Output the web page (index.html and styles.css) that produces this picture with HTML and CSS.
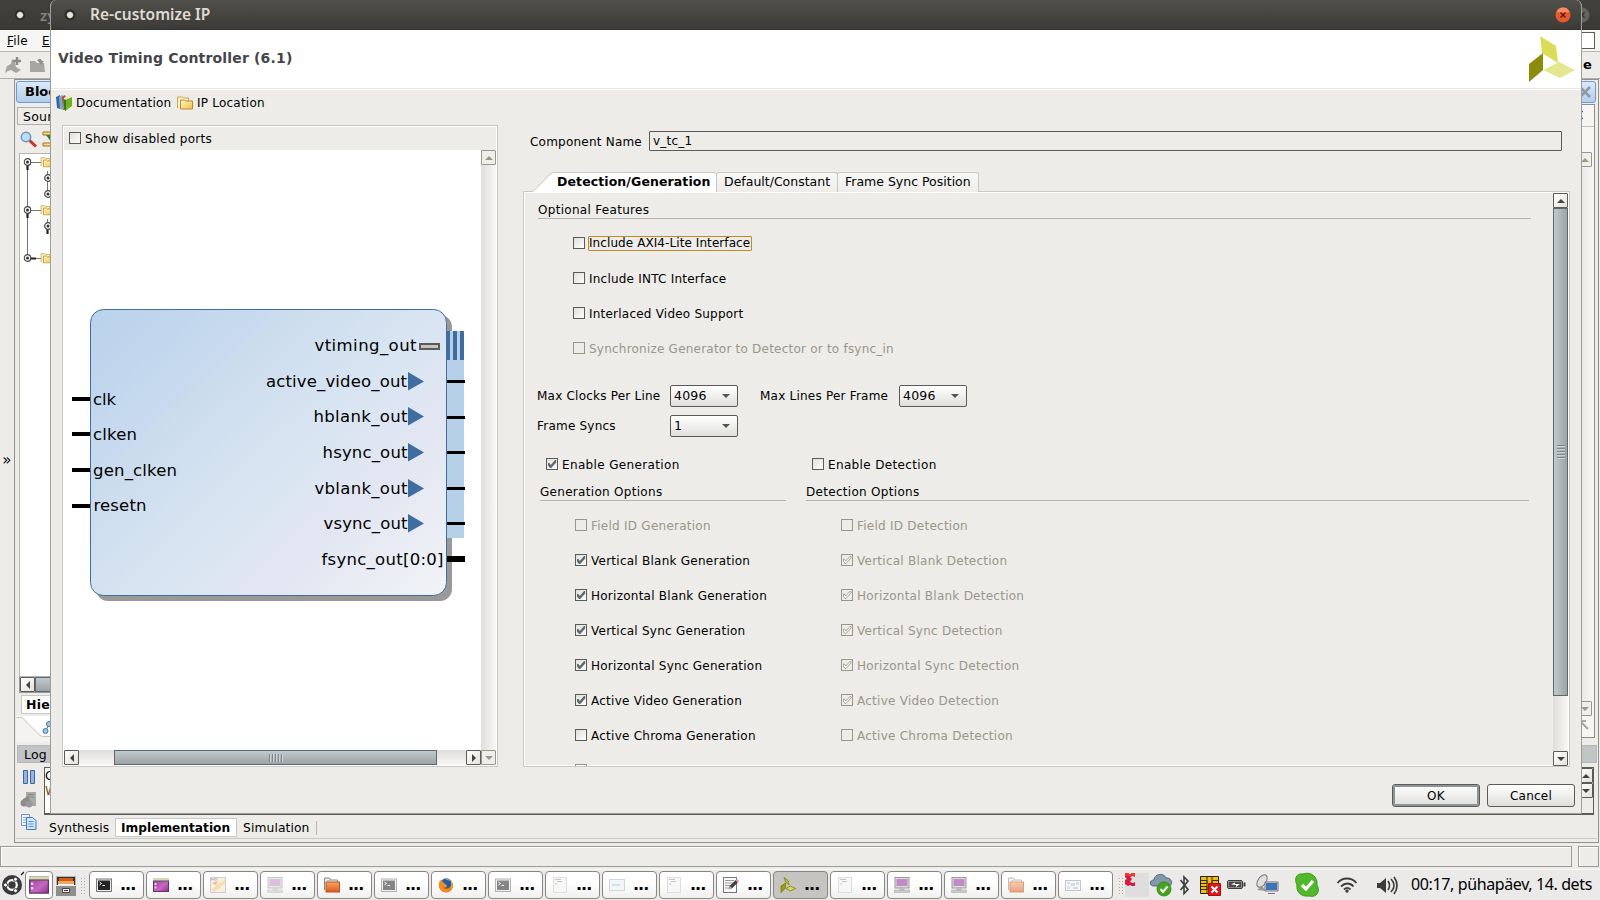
FILE: index.html
```html
<!DOCTYPE html>
<html lang="et">
<head>
<meta charset="utf-8">
<title>Re-customize IP</title>
<link rel="stylesheet" href="styles.css">
</head>
<body>
<svg class="defs" width="0" height="0">
  <defs>
    <linearGradient id="gFold" x1="0" y1="0" x2="1" y2="1"><stop offset="0" stop-color="#fff6c8"/><stop offset="1" stop-color="#f3c142"/></linearGradient>
    <linearGradient id="gPurple" x1="0" y1="0" x2="1" y2="1"><stop offset="0" stop-color="#a23a9f"/><stop offset=".6" stop-color="#c468c1"/><stop offset="1" stop-color="#8f2d8d"/></linearGradient>
    <linearGradient id="gOrange" x1="0" y1="0" x2="0" y2="1"><stop offset="0" stop-color="#f6a568"/><stop offset="1" stop-color="#de5a20"/></linearGradient>
    <linearGradient id="gBox" x1="0" y1="0" x2="1" y2="1"><stop offset="0" stop-color="#ddddda"/><stop offset="1" stop-color="#fff"/></linearGradient>
    <symbol id="folder" viewBox="0 0 16 14"><path d="M.5 12.500V1.500h5l1 1h5v3" fill="#fff3c4" stroke="#c9a25a"/><path d="M3.500 13.500v-9h4l1 1h7v8z" fill="url(#gFold)" stroke="#b98a34"/></symbol>
    <symbol id="node" viewBox="0 0 8 8"><circle cx="4" cy="4" r="3.300" fill="#fff" stroke="#444" stroke-width="1.200"/><circle cx="4" cy="4" r="1.500" fill="#333"/></symbol>
    <symbol id="box" viewBox="0 0 12 12"><rect x=".5" y=".5" width="11" height="11" fill="url(#gBox)" stroke="#5c5b55"/></symbol>
    <symbol id="boxOn" viewBox="0 0 12 12"><rect x=".5" y=".5" width="11" height="11" fill="url(#gBox)" stroke="#5c5b55"/><path d="M2 5h1.500l1.300 2L9 2h1.200v2.500L5.200 10H4L2 7.500z" fill="#5e686d"/></symbol>
    <symbol id="boxOff" viewBox="0 0 12 12"><rect x=".5" y=".5" width="11" height="11" fill="none" stroke="#99968a"/></symbol>
    <symbol id="boxOnOff" viewBox="0 0 12 12"><rect x=".5" y=".5" width="11" height="11" fill="none" stroke="#99968a"/><path d="M2.500 5h1l1.300 2L8.800 2.500h1.200V4L5 9.500H4L2.500 7.500z" fill="#f6f5f2" stroke="#99968a" stroke-width=".8"/></symbol>
    <symbol id="term" viewBox="0 0 16 16"><rect x=".5" y="2" width="15" height="12.500" fill="#eee" stroke="#777"/><rect x="2" y="3.500" width="12" height="9.500" fill="#252525"/><path d="M3.500 5l2 1.500-2 1.500M6.500 8.500h2.500" stroke="#fff" fill="none"/></symbol>
    <symbol id="purple" viewBox="0 0 16 16"><rect x=".5" y="1.500" width="15" height="13" fill="url(#gPurple)" stroke="#5a3a58"/><path d="M0 1h16v3H0z" fill="#d9d6b6"/><path d="M0 4h16" stroke="#555"/><path d="M1.500 6h2v2h-2zM1.500 9.500h2v2h-2z" fill="#ead5ea"/></symbol>
    <symbol id="map" viewBox="0 0 16 16"><rect x=".5" y=".5" width="15" height="15" fill="#fbe8c9" stroke="#aaa"/><path d="M1 12C6 12 5 7 9 6s4-3 6-4v5c-4 1-4 4-7 5s-3 2-4 3z" fill="#f4c67b"/><path d="M2 2l3 3 3-2-2 5-4-2 3-1z" fill="#e48158"/><path d="M1 4V1l2 2 2-2v3M7 1v2" stroke="#777" fill="none"/></symbol>
    <symbol id="pc" viewBox="0 0 16 16"><rect x="1" y=".5" width="14" height="10.500" fill="#dcdcdc" stroke="#999"/><rect x="2.500" y="2" width="11" height="7" fill="#c08bc6"/><path d="M6 11h4v2H6zM.5 13h15v2.500H.5z" fill="#ccc" stroke="#aaa" stroke-width=".6"/></symbol>
    <symbol id="ofold" viewBox="0 0 16 16"><path d="M.5 13V1h5l1 2h7v3" fill="#eee" stroke="#888"/><rect x="2" y="5" width="13.500" height="10" fill="url(#gOrange)" stroke="#b9541d"/><path d="M3 3.500h9" stroke="#bbb"/></symbol>
    <symbol id="ffox" viewBox="0 0 16 16"><circle cx="8" cy="8.500" r="7" fill="#e8611b"/><circle cx="8.500" cy="6.500" r="5" fill="#1f5da8"/><path d="M2 3c1 2 3 1 4 3s3 1 3 3-3 2-4 1c1 3 6 3 8 0s1-5 0-6c3 3 2 8-1 10s-8 1-10-2-1-6 0-9z" fill="#f58b1d"/><path d="M12 3c2 3 2 6 0 8 3-1 3-6 0-8z" fill="#fbd043"/><path d="M7 2c2-1 4 0 5 2l-3-1z" fill="#62b4e8"/></symbol>
    <symbol id="doc" viewBox="0 0 16 16"><rect x="1.500" y=".5" width="13" height="15" fill="#f7f7f7" stroke="#ddd"/><path d="M3 2.500h6M5 4.500h5M3 7h2" stroke="#c5c5c5"/></symbol>
    <symbol id="sheet" viewBox="0 0 16 16"><rect x=".5" y="2.500" width="15" height="11" fill="#f3f6f6" stroke="#d0d6d6"/><path d="M3 8h8" stroke="#a8d8dc"/></symbol>
    <symbol id="edit" viewBox="0 0 16 16"><rect x=".5" y=".5" width="13" height="15" fill="#fafafa" stroke="#777"/><path d="M2 3.500h9M2 6h8M2 8.500h6M2 11h4" stroke="#999"/><path d="M6 12l1-3 6-6 2 2-6 6z" fill="#444" stroke="#222" stroke-width=".5"/><path d="M12.500 3.500L14 2l2 2-1.500 1.500z" fill="#d890c0"/><path d="M5.500 12.500L7 9.500l2 1.500z" fill="#e9c07c"/></symbol>
    <symbol id="xil" viewBox="0 0 16 16"><path d="M4 .5l4.500 3.500.5 4-3.500-3z" fill="#b9bd35" stroke="#77790f" stroke-width=".7"/><path d="M1 9l4.500-3v5L1 15.500z" fill="#9c9e12" stroke="#6f7007" stroke-width=".7"/><path d="M6 11.500L10.500 9l5 2.500-5 2.500z" fill="#d3d650" stroke="#77790f" stroke-width=".7"/></symbol>
    <symbol id="win" viewBox="0 0 16 16"><rect x=".5" y="3.500" width="15" height="10" fill="#f4f4f4" stroke="#999"/><path d="M2 5h3v2H2zM6 6h4v3H6zM11 5h3v3h-3zM8 10h5v2H8z" fill="#a9c3dd"/><path d="M2 9h3v3H2z" fill="#ccc"/></symbol>
  </defs>
</svg>

<div class="desktop">
  <div class="main-window">
    <div class="titlebar back-title">
      <span class="wm-dot"></span><span class="back-name">zy</span>
      <svg class="back-close" width="16" height="16"><circle cx="8" cy="8" r="7.500" fill="#63625d"/><path d="M5.500 5.500l5 5m0-5l-5 5" stroke="#333" stroke-width="1.500"/></svg>
    </div>
    <div class="menubar"><span><u>F</u>ile</span><span><u>E</u>dit</span><i class="search"></i></div>
    <div class="toolbar">
      <svg width="18" height="18" viewBox="0 0 18 18"><path d="M1 17l2-7 4-2 1-5 3 4 1 4 5 3-5 3-5-3-3 1z" fill="#a5a5a2"/><path d="M13 1v8M9 5h8" stroke="#8b8b88" stroke-width="2.500"/></svg>
      <svg width="17" height="16" viewBox="0 0 17 16"><path d="M1 15V4h5l2 2h7l1 9z" fill="#a6a6a3"/><path d="M8 4c2-3 4-3 5 0h2l-3 4-3-4z" fill="#8f8f8c"/></svg>
      <b>e</b>
    </div>
    <div class="workspace">
      <div class="rail">»</div>
      <div class="frame">
        <div class="upper">
          <div class="lcol">
            <div class="pane-title">Block</div>
            <div class="subtab">Sources</div>
            <svg class="tools" width="34" height="20" viewBox="0 0 34 20"><path d="M11 10l7 6.500" stroke="#c53524" stroke-width="3"/><circle cx="8" cy="7" r="4.700" fill="#b9dcf7" stroke="#6f96bd" stroke-width="1.500"/><path d="M25 2h9v3h-9zM25 13h9v3h-9z" fill="#fbd983" stroke="#9b7425"/><path d="M28 5h6v8l-3-4z" fill="#248a20"/></svg>
            <div class="tree">
              <svg width="30" height="110" viewBox="0 0 30 110"><path d="M7.500 8v96M8 8.500h13M8 56.500h13M8 104.500h13M27.500 17v24M27.500 65v15" stroke="#777"/><path d="M7.500 11v5M7.500 59v5M11 104.500h5M27.500 75v5" stroke="#222" stroke-width="2.200"/><use href="#node" x="3.500" y="4" width="8" height="8"/><use href="#node" x="3.500" y="52" width="8" height="8"/><use href="#node" x="3.500" y="100" width="8" height="8"/><use href="#node" x="24" y="20" width="8" height="8"/><use href="#node" x="24" y="36" width="8" height="8"/><use href="#node" x="24" y="68" width="8" height="8"/><use href="#folder" x="20" y="2.500" width="14" height="11"/><use href="#folder" x="20" y="50.500" width="14" height="11"/><use href="#folder" x="20" y="98.500" width="14" height="11"/></svg>
            </div>
            <div class="hsb mini"><span class="sbtn left"></span><span class="thumb"></span></div>
            <div class="hier">Hierarchy</div>
            <svg class="swoop" width="34" height="26" viewBox="0 0 34 26"><path d="M0 1.500h5c5 0 13 19 22 19h7V0H0z" fill="#fff"/><path d="M0 1.500h5c2 0 4 3 6 5l12 12c2 2 4 2 6 2h5V26H0z" fill="#f4f3f1"/><path d="M0 1.500h5c2 0 4 3 6 5l12 12c2 2 4 2 6 2h5" fill="none" stroke="#c4c4c0"/><path d="M29 15l5-7" stroke="#666"/><circle cx="29.500" cy="15" r="2.500" fill="#9cc7ec" stroke="#4b7397"/><circle cx="33" cy="8" r="2.500" fill="#9cc7ec" stroke="#4b7397"/></svg>
          </div>
          <div class="rcol">
            <div class="pane-title r"><svg width="12" height="12" viewBox="0 0 12 12"><path d="M1 1l10 10M11 1L1 11" stroke="#8d9aa6" stroke-width="2.500"/></svg></div>
            <div class="rbox">
              <div class="rx">×</div>
              <div class="rscroll"><span class="sbtn up dis"></span><span class="grow"></span><span class="sbtn down dis"></span></div>
              <svg width="10" height="10" viewBox="0 0 10 10"><path d="M1 7V1h6M2 2l7 7" stroke="#aaa9a4" stroke-width="2.200" fill="none"/></svg>
            </div>
          </div>
        </div>
        <div class="loghead">Log</div>
        <div class="logrow">
          <div class="logicons">
            <svg width="14" height="16" viewBox="0 0 14 16"><path d="M1.500 1.500h4v13h-4zM8.500 1.500h4v13h-4z" fill="#8fb5ea" stroke="#3f669d"/></svg>
            <svg width="17" height="17" viewBox="0 0 17 17"><path d="M6 1h10v14H6z" fill="#a8a8a6"/><path d="M8 3.500h6M8 6h6" stroke="#888"/><circle cx="4" cy="12" r="3.500" fill="#8c8c8a"/><circle cx="9" cy="13" r="3.500" fill="#989896"/><path d="M3 8l5-3 2 5-7 1z" fill="#8c8c8a"/></svg>
            <svg width="17" height="17" viewBox="0 0 17 17"><path d="M1.500 1.500h8v11h-8z" fill="#eaf2fc" stroke="#7a94bd"/><path d="M3 4.500h4M3 7h4M3 9.500h4" stroke="#8fa9d2"/><path d="M6.500 4.500h6l3.500 3v9H6.500z" fill="#cfe5fb" stroke="#4978b5"/><path d="M8.500 8.500h5M8.500 11h5M8.500 13.500h5" stroke="#5b93cf"/></svg>
          </div>
          <div class="logtext"><div class="logcol"><span>Co</span><span>W</span></div><div class="logsb"><span class="sbtn up"></span><span class="sbtn down"></span></div></div>
        </div>
        <div class="runtabs"><span>Synthesis</span><b>Implementation</b><span>Simulation</span></div>
      </div>
    </div>
    <div class="status"><i class="wide"></i><i class="small"></i></div>
  </div>

  <div class="dialog">
    <div class="titlebar dlg-title">
      <span class="wm-dot"></span><span class="dlg-name">Re-customize IP</span>
      <svg width="16" height="16" viewBox="0 0 16 16"><circle cx="8" cy="8" r="7.500" fill="#e9592d"/><path d="M1.500 5a7 7 0 0 1 13 0c-3 1-10 1-13 0z" fill="#f58a64"/><path d="M5.500 5.500l5 5m0-5l-5 5" stroke="#5a2413" stroke-width="1.600"/></svg>
    </div>
    <div class="dlg-head">
      <h1>Video Timing Controller (6.1)</h1>
      <svg width="48" height="48" viewBox="0 0 48 48"><path d="M12 1l16 10 2 17-16-10z" fill="#dbdd59"/><path d="M1 29l14-11v17L1 47z" fill="#8b8c0c"/><path d="M15 35l16-8 16 8-15 8z" fill="#e4e78f"/></svg>
    </div>
    <div class="dlg-tools">
      <svg width="16" height="17" viewBox="0 0 16 17"><path d="M0 3l4-2v14l-3-1z" fill="#2e6da5"/><path d="M3 3l3-2 2 1v14l-4-1z" fill="#7fa6c8"/><path d="M6 3l3-2 1 2v12l-3 1z" fill="#c8472e"/><path d="M8 4l4-3 3 1-5 3v11l-3-1z" fill="#efe6d4"/><path d="M9 6l7-3v9l-7 5z" fill="#6db31e"/><path d="M7.500 5L10 6v11l-2.500-2z" fill="#37731b"/></svg>
      <span class="w-doc">Documentation</span>
      <svg class="f" width="16" height="15"><use href="#folder" width="16" height="15"/></svg>
      <span>IP Location</span>
    </div>
    <div class="dlg-body">
      <div class="preview">
        <label class="check"><svg><use href="#box"/></svg><span>Show disabled ports</span></label>
        <div class="canvas-row">
          <svg class="canvas" width="417" height="600" viewBox="64 150 417 600">
            <defs><linearGradient id="gBlk" gradientUnits="userSpaceOnUse" x1="113" y1="290" x2="424" y2="615"><stop offset="0" stop-color="#b9d2eb"/><stop offset=".27" stop-color="#c8daef"/><stop offset=".3" stop-color="#cbdced"/><stop offset=".55" stop-color="#d9e5f2"/><stop offset=".72" stop-color="#e2e6f2"/><stop offset="1" stop-color="#f1f3f6"/></linearGradient></defs>
            <rect x="96" y="315" width="356" height="286" rx="12" fill="#999"/>
            <path d="M447 360h17v178h-17z" fill="#b7d0ea"/>
            <path d="M447 331h17v29h-17z" fill="#3f6d9f"/><path d="M450 331h3v29h-3zM457 331h3v29h-3z" fill="#b7d0ea"/>
            <rect x="90.500" y="309.500" width="356" height="286" rx="13" fill="url(#gBlk)" stroke="#3f6d9f"/>
            <path d="M72 399h18M72 434h18M72 470h18M72 506h18" stroke="#000" stroke-width="4"/>
            <path d="M447 381.500h18M447 417.500h18M447 452.500h18M447 488.500h18M447 523.500h18" stroke="#000" stroke-width="3"/><path d="M447 559h18" stroke="#000" stroke-width="6"/>
            <path d="M408 372l16 9.500-16 9zM408 407l16 9.500-16 9zM408 443l16 9.500-16 9zM408 479l16 9.500-16 9zM408 514l16 9.500-16 9z" fill="#3f6d9f"/>
            <rect x="420" y="344" width="19" height="5" fill="#c4c4c2" stroke="#5c5b55" stroke-width="2"/>
            <g class="port">
              <text x="93" y="405" textLength="23">clk</text><text x="93" y="440" textLength="44">clken</text><text x="93" y="476" textLength="84">gen_clken</text><text x="93.500" y="511" textLength="53">resetn</text>
              <text x="314.500" y="351" textLength="102">vtiming_out</text><text x="266" y="387" textLength="141">active_video_out</text><text x="313.500" y="422" textLength="94">hblank_out</text><text x="322.500" y="458" textLength="85">hsync_out</text><text x="314.500" y="494" textLength="93">vblank_out</text><text x="323.500" y="529" textLength="84">vsync_out</text><text x="321.500" y="565" textLength="122">fsync_out[0:0]</text>
            </g>
          </svg>
          <div class="vsb idle"><span class="sbtn up dis"></span></div>
        </div>
        <div class="hrow"><div class="hsb"><span class="sbtn left"></span><span class="thumb"><i class="grip"></i></span><span class="sbtn right"></span></div><span class="sbtn down dis"></span></div>
      </div>

      <div class="config">
        <div class="name-row"><span>Component Name</span><div class="field">v_tc_1</div></div>
        <div class="tabs">
          <div class="tab on"><svg width="195" height="20" viewBox="0 0 195 20"><path d="M-4 20h1c3 0 4-2 6-4L15 4c3-3 5-3.500 8-3.500h157q3 0 3 4V20z" fill="#fff"/><path d="M-4 19.500h1c3 0 4-2 6-4L13 5c3-3 4-4.500 8-4.500h159q3 0 3 4V20" fill="none" stroke="#c8c8c4"/></svg><b>Detection/Generation</b></div>
          <div class="tab t2">Default/Constant</div>
          <div class="tab t3">Frame Sync Position</div>
        </div>
        <div class="sheet">
          <div class="form">
            <div class="legend">Optional Features</div>
            <div class="opts">
              <label class="check"><svg><use href="#box"/></svg><span class="focus">Include AXI4-Lite Interface</span></label>
              <label class="check"><svg><use href="#box"/></svg><span>Include INTC Interface</span></label>
              <label class="check"><svg><use href="#box"/></svg><span>Interlaced Video Support</span></label>
              <label class="check off"><svg><use href="#boxOff"/></svg><span>Synchronize Generator to Detector or to fsync_in</span></label>
            </div>
            <div class="selects">
              <span>Max Clocks Per Line</span><div class="select">4096</div><span class="second">Max Lines Per Frame</span><div class="select">4096</div>
              <span>Frame Syncs</span><div class="select">1</div>
            </div>
            <div class="columns">
              <div class="col gen">
                <label class="check"><svg><use href="#boxOn"/></svg><span>Enable Generation</span></label>
                <div class="legend">Generation Options</div>
                <div class="opts">
                  <label class="check off"><svg><use href="#boxOff"/></svg><span>Field ID Generation</span></label>
                  <label class="check"><svg><use href="#boxOn"/></svg><span>Vertical Blank Generation</span></label>
                  <label class="check"><svg><use href="#boxOn"/></svg><span>Horizontal Blank Generation</span></label>
                  <label class="check"><svg><use href="#boxOn"/></svg><span>Vertical Sync Generation</span></label>
                  <label class="check"><svg><use href="#boxOn"/></svg><span>Horizontal Sync Generation</span></label>
                  <label class="check"><svg><use href="#boxOn"/></svg><span>Active Video Generation</span></label>
                  <label class="check"><svg><use href="#box"/></svg><span>Active Chroma Generation</span></label>
                  <label class="check off"><svg><use href="#boxOff"/></svg></label>
                </div>
              </div>
              <div class="col det">
                <label class="check"><svg><use href="#box"/></svg><span>Enable Detection</span></label>
                <div class="legend">Detection Options</div>
                <div class="opts">
                  <label class="check off"><svg><use href="#boxOff"/></svg><span>Field ID Detection</span></label>
                  <label class="check off"><svg><use href="#boxOnOff"/></svg><span>Vertical Blank Detection</span></label>
                  <label class="check off"><svg><use href="#boxOnOff"/></svg><span>Horizontal Blank Detection</span></label>
                  <label class="check off"><svg><use href="#boxOnOff"/></svg><span>Vertical Sync Detection</span></label>
                  <label class="check off"><svg><use href="#boxOnOff"/></svg><span>Horizontal Sync Detection</span></label>
                  <label class="check off"><svg><use href="#boxOnOff"/></svg><span>Active Video Detection</span></label>
                  <label class="check off"><svg><use href="#boxOff"/></svg><span>Active Chroma Detection</span></label>
                </div>
              </div>
            </div>
          </div>
          <div class="vsb"><span class="sbtn up"></span><span class="vthumb"><i class="grip v"></i></span><span class="grow"></span><span class="sbtn down"></span></div>
        </div>
      </div>
    </div>
    <div class="dlg-foot"><div class="btn default">OK</div><div class="btn">Cancel</div></div>
  </div>

  <div class="taskbar">
    <svg class="ubuntu" width="24" height="28" viewBox="0 0 24 28"><circle cx="12" cy="15" r="10" fill="#3a3a3a"/><circle cx="12" cy="15" r="4.800" fill="none" stroke="#fff" stroke-width="2.200"/><g fill="#fff" stroke="#3a3a3a"><circle cx="5.500" cy="15" r="2"/><circle cx="15.500" cy="9.300" r="2"/><circle cx="15.500" cy="20.700" r="2"/></g><path d="M21 5l3-3" stroke="#222" stroke-width="1.500"/></svg>
    <div class="launch on"><svg width="22" height="20"><use href="#purple" width="22" height="20"/></svg></div>
    <svg class="files" width="20" height="22" viewBox="0 0 20 22"><path d="M0 1h20v9H0z" fill="#b5b5b3"/><path d="M1 2h18v8H1z" fill="#333"/><path d="M3 3h14v3H3z" fill="#d35a1c"/><path d="M2 6h16v3H2z" fill="#f5a55c"/><path d="M2 9h16v1H2z" fill="#fff"/><path d="M0 11h20v10H0z" fill="#8e8e8c"/><path d="M6.500 13.500h7v4h-7z" fill="#eee" stroke="#444"/><path d="M8 15.500h4" stroke="#333"/></svg>
    <i class="handle"></i>
    <div class="tasks">
      <div class="task"><svg><use href="#term"/></svg>...</div>
      <div class="task"><svg><use href="#purple"/></svg>...</div>
      <div class="task"><svg class="dim"><use href="#map"/></svg>...</div>
      <div class="task"><svg class="dim"><use href="#pc"/></svg>...</div>
      <div class="task"><svg><use href="#ofold"/></svg>...</div>
      <div class="task"><svg class="dim"><use href="#term"/></svg>...</div>
      <div class="task"><svg><use href="#ffox"/></svg>...</div>
      <div class="task"><svg class="dim"><use href="#term"/></svg>...</div>
      <div class="task"><svg><use href="#doc"/></svg>...</div>
      <div class="task"><svg><use href="#sheet"/></svg>...</div>
      <div class="task"><svg><use href="#doc"/></svg>...</div>
      <div class="task"><svg><use href="#edit"/></svg>...</div>
      <div class="task pressed"><svg><use href="#xil"/></svg>...</div>
      <div class="task"><svg><use href="#doc"/></svg>...</div>
      <div class="task"><svg><use href="#pc"/></svg>...</div>
      <div class="task"><svg><use href="#pc"/></svg>...</div>
      <div class="task"><svg class="dim"><use href="#ofold"/></svg>...</div>
      <div class="task"><svg class="dim"><use href="#win"/></svg>...</div>
    </div>
    <i class="handle h2"></i>
    <svg class="tray" width="280" height="30" viewBox="1124 870 280 30">
      <path d="M1125 873h24v24h-24z" fill="#dedede"/>
      <path d="M1125 873h3l2 1.500 2-1.500h3v4l-2-1-3 1 2 2-2 3 3 1 2-1v4h-3l-2-1-2 1-3-2v-4l2-1-2-2z" fill="#d8193f"/><path d="M1125 873h3l2 1.500 2-1.500h3v3h-10z" fill="#ee3b2f"/>
      <path d="M1154 886c-5 0-5-6 0-6 0-6 10-8 12-2 6-1 8 8 2 8z" fill="#8299ab" stroke="#546a7c"/>
      <circle cx="1164" cy="889" r="7" fill="#44a51c" stroke="#2f8010" stroke-width=".8"/><path d="M1160.500 889l2.500 3 4.500-5.500" fill="none" stroke="#fff" stroke-width="2"/>
      <path d="M1180.500 880l7.500 9.500-4 4V877l4 4-7.500 9" fill="none" stroke="#3c3c3c" stroke-width="1.600"/>
      <path d="M1200.500 876.500h18v17h-18z" fill="#f2bc12" stroke="#222"/><path d="M1201 880.500h6v3h-6m0 3h6v3h-6M1218 880.500h-6v3h6M1207 877v16M1212 877v8" stroke="#3a2c00" fill="none"/><path d="M1208.500 883.500h12v12h-12z" fill="#e0151d" stroke="#a80c10"/><path d="M1211.500 886.500l6 6m0-6l-6 6" stroke="#fff" stroke-width="2"/>
      <rect x="1227.500" y="880.500" width="15" height="8" rx="1.500" fill="#4a4a4a" stroke="#3c3c3c"/><rect x="1228.500" y="881.500" width="13" height="6" fill="none" stroke="#aaa" stroke-width=".7"/><path d="M1243.500 882.500h2v4h-2z" fill="#3c3c3c"/><path d="M1231 884.500l4-2v1.500h5l-4 3v-2z" fill="#fff"/>
      <ellipse cx="1262" cy="881" rx="4" ry="7" transform="rotate(35 1262 881)" fill="#dedede" stroke="#777"/><path d="M1257 890l5-4 4 5z" fill="#999"/><path d="M1265.500 882.500h12v8h-12z" fill="#3c73ba" stroke="#ddd"/><path d="M1265 882h13v9h-13zM1268 893.500h7" fill="none" stroke="#777"/>
      <path d="M1303 874c8-3 15 3 14 11 4 7-1 13-8 11-8 1-13-4-12-11-3-6-1-12 6-11z" fill="#52b82b" stroke="#3c9a1c"/><path d="M1302 885l4 4 7-8" fill="none" stroke="#fff" stroke-width="3.200"/>
      <g fill="none" stroke="#3c3c3c" stroke-width="1.800"><path d="M1337.500 883c5-6 14-6 19 0M1341 886.500c4-4 9-4 12.500 0M1344 889.500c2-2 4.500-2 6.500 0"/></g><circle cx="1347" cy="891" r="1.700" fill="#3c3c3c"/>
      <path d="M1377 883h3l6-5v15l-6-5h-3z" fill="#3c3c3c"/><path d="M1388 881c2 3 2 6 0 9M1391 879c4 4 4 9 0 13M1394 877c4 5 4 12 0 17" stroke="#3c3c3c" stroke-width="1.700" fill="none"/>
    </svg>
    <span class="clock">00:17, pühapäev, 14. dets</span>
  </div>
</div>
</body>
</html>
```

FILE: styles.css
```css
* { box-sizing: border-box; }
body { margin: 0; font: 12px/14px "DejaVu Sans", sans-serif; letter-spacing: 0.22px; color: #000; }
svg { display: block; flex: none; }
.defs { position: absolute; }
.desktop { position: relative; width: 1600px; height: 900px; overflow: hidden; background: #edece8; }

/* window chrome */
.titlebar { display: flex; align-items: center; height: 30px; background: linear-gradient(#504f49, #3c3b37); border-bottom: 1px solid #33322e; font-family: "Noto Sans", sans-serif; font-weight: 600; font-size: 15px; letter-spacing: 0; }
.wm-dot { width: 12px; height: 12px; border-radius: 50%; background: radial-gradient(circle, #e8e5df 0 2.5px, #2c2b28 3.8px 5px, #4a4944 6px); flex: none; }
.main-window { display: flex; flex-direction: column; height: 870px; }
.back-title { background: linear-gradient(#42413d, #3a3935); color: #85837b; padding-left: 14px; flex: none; }
.back-name { margin-left: 14px; }
.back-close { margin-left: auto; margin-right: 10.500px; }
.menubar { display: flex; align-items: center; height: 22px; flex: none; background: #f6f6f5; border-bottom: 1px solid #b9b8b4; padding-left: 7px; gap: 14px; }
.search { width: 60px; height: 17px; border: 1px solid #5c5b55; background: #fff; margin-left: auto; margin-right: 5px; }
.toolbar { display: flex; align-items: center; height: 27px; flex: none; border-bottom: 1px solid #b0afab; padding-left: 4px; gap: 7px; }
.toolbar b { margin-left: auto; margin-right: 8px; font-size: 13px; }
.workspace { display: flex; flex: 1; min-height: 0; }
.rail { width: 14px; display: flex; align-items: center; justify-content: center; padding-bottom: 2px; font-size: 15px; }
.frame { display: flex; flex-direction: column; width: 1585px; height: 764px; border: 1px solid #8f8f8c; padding: 1px; }
.upper { display: flex; justify-content: space-between; height: 664px; }
.lcol { width: 34px; overflow: hidden; display: flex; flex-direction: column; white-space: nowrap; }
.pane-title { width: 60px; height: 22px; border: 1px solid #6c9bcf; border-radius: 3px; background: linear-gradient(#dbe9f7, #b3cdea); font-weight: bold; font-size: 13px; line-height: 20px; padding-left: 8px; letter-spacing: 0; flex: none; }
.subtab { width: 60px; height: 18px; margin-top: 4px; margin-left: 1px; border: 1px solid #b0afab; line-height: 17px; padding-left: 5px; flex: none; font-size: 12.500px; }
.tools { margin: 5px 0 3px 2px; }
.tree { height: 524px; margin-left: 3px; border: 1px solid #b5b5b1; border-right: 0; background: #fff; overflow: hidden; flex: none; }
.hier { width: 60px; height: 19px; margin: 2px 0 0 5px; border: 1px solid #c8c8c4; background: #fff; font-weight: bold; line-height: 18px; padding-left: 4px; font-size: 12.500px; flex: none; }
.swoop { margin-top: 2px; }
.rcol { width: 80px; display: flex; flex-direction: column; }
.pane-title.r { width: 79px; display: flex; justify-content: flex-end; align-items: center; padding-right: 4px; }
.rbox { height: 634px; margin-top: 1px; margin-right: 2px; border: 1px solid #8f8f8c; background: #f6f5f4; display: flex; flex-direction: column; align-items: flex-end; padding-bottom: 7px; flex: none; }
.rbox > svg { margin: 4px 5px 0 0; }
.rx { height: 22px; width: 78px; border-bottom: 1px solid #c0c0bc; text-align: right; padding: 3px 9px 0 0; font-size: 15px; }
.rscroll { display: flex; flex-direction: column; flex: 1; margin: 25px 2px 0 0; width: 15px; background: linear-gradient(90deg, #e4e3e0, #f6f5f4); }
.grow { flex: 1; }
.loghead { height: 18px; background: #c1c4c7; border: 1px solid #b4b6b8; padding-left: 6px; line-height: 18px; flex: none; font-size: 12.500px; margin-left: 1px; }
.logrow { display: flex; height: 52px; padding-top: 4px; }
.logicons { width: 28px; display: flex; flex-direction: column; align-items: center; gap: 5px; padding: 2px 3px 0 0; }
.logicons svg:first-child { margin-bottom: 1px; }
.logtext { height: 48px; width: 1550px; border: 1px solid #5c5b55; border-width: 1px 1px 2px; background: #fff; display: flex; justify-content: space-between; overflow: hidden; }
.logcol { display: flex; flex-direction: column; width: 8px; overflow: hidden; gap: 1px; padding-top: 1px; }
.logcol span:last-child { color: #7a4a10; }
.logsb { background: #edece8; display: flex; flex-direction: column; }
.runtabs { display: flex; align-items: center; height: 23px; margin-top: 1px; padding: 1px 0 0 33px; border-bottom: 1px solid #c8c8c4; font-size: 12.300px; letter-spacing: 0.1px; flex: none; }
.runtabs b { height: 19px; width: 122px; line-height: 18px; border: 1px solid #c8c8c4; background: #fff; margin: 0 6px; padding: 0 0 0 5px; font-size: 12.200px; letter-spacing: 0; }
.runtabs span:first-child { width: 60px; }
.runtabs span:last-child { border-right: 1px solid #b9b8b4; padding-right: 6px; }
.status { display: flex; gap: 6px; height: 27px; padding: 3px 1px 2px 0; border-bottom: 1px solid #f8f8f8; }
.status i { border: 1px solid #9c9c98; box-shadow: inset 1px 1px #fff; }
.wide { width: 1572px; }
.small { width: 21px; }

/* dialog */
.dialog { position: absolute; left: 50px; top: 0; width: 1532px; height: 814px; display: flex; flex-direction: column; background: #edece8; border: 1px solid #9d9d9a; border-top: 0; overflow: hidden; border-radius: 6px 6px 0 0; }
.dlg-title { padding: 0 10px 0 13px; color: #dfdbd2; flex: none; }
.dlg-name { margin: -2px auto 0 14px; font-size: 15.500px; }
.dlg-head { display: flex; justify-content: space-between; height: 60px; flex: none; background: #fff; border-bottom: 1px solid #fff; box-shadow: inset 0 -1px #e6e5e1; padding: 5px 5px 0 7px; }
.dlg-head h1 { margin: 15px 0 0; font-size: 14px; line-height: 17px; color: #44444a; letter-spacing: 0.17px; }
.dlg-tools { display: flex; align-items: center; height: 35px; padding: 0 0 10px 5px; gap: 3px; flex: none; }
.w-doc { width: 97px; padding-left: 1px; }
.dlg-tools .f { margin-left: 2px; }
.dlg-tools span:last-child { margin-left: 1px; }
.dlg-body { display: flex; height: 642px; padding-left: 11px; flex: none; }
.preview { width: 436px; height: 642px; border: 1px solid #c8c8c4; box-shadow: inset 0 0 0 1px #fff; padding: 1px; display: flex; flex-direction: column; }
.preview > .check { margin: 5px 0 6px 5px; letter-spacing: 0.3px; }
.canvas-row { display: flex; height: 600px; background: #fff; }
.port { font-size: 16.500px; letter-spacing: 0; }
.vsb { width: 15px; display: flex; flex-direction: column; background: linear-gradient(90deg, #dfdedb, #f8f7f6); }
.hrow { display: flex; height: 15px; }
.hsb { display: flex; height: 15px; width: 417px; background: linear-gradient(#dfdedb, #f8f7f6); }
.hsb .thumb { width: 323px; margin: 0 29px 0 35px; border: 1px solid #5d686e; background: linear-gradient(#c0c9ce, #9da3a4); display: flex; align-items: center; justify-content: center; }
.hsb.mini { width: 60px; border: 1px solid #999; border-width: 0 0 1px 1px; margin-left: 3px; height: 16px; flex: none; }
.hsb.mini .thumb { width: 60px; margin: 0; flex: none; }
.grip { width: 14px; height: 8px; background: repeating-linear-gradient(90deg, #7f888c 0 1px, #ccd2d5 1px 2px, transparent 2px 3px); }
.grip.v { width: 8px; height: 14px; background: repeating-linear-gradient(#7f888c 0 1px, #ccd2d5 1px 2px, transparent 2px 3px); }
.sbtn { width: 15px; height: 15px; border: 1px solid #5c5b55; border-radius: 1px; background: linear-gradient(135deg, #fff, #e2e1dd); flex: none; display: flex; align-items: center; justify-content: center; }
.sbtn::after { content: ""; border: 4px solid transparent; }
.sbtn.up::after { border-bottom-color: #44433e; border-top: 0; }
.sbtn.down::after { border-top-color: #44433e; border-bottom: 0; }
.sbtn.left::after { border-right-color: #44433e; border-left: 0; }
.sbtn.right::after { border-left-color: #44433e; border-right: 0; }
.sbtn.dis { border-color: #99968a; background: #efeeea; }
.sbtn.dis.up::after { border-bottom-color: #99968a; }
.sbtn.dis.down::after { border-top-color: #99968a; }
.vthumb { height: 488px; border: 1px solid #5d686e; background: linear-gradient(90deg, #c0c9ce, #9da3a4); display: flex; align-items: center; justify-content: center; }

.check { display: flex; align-items: center; height: 12px; flex: none; white-space: nowrap; }
.check svg { width: 12px; height: 12px; }
.check span { margin-left: 4px; line-height: 14px; padding-top: 1px; }
.check.off { color: #99968a; }
.check .focus { margin-left: 3px; width: 164px; height: 15px; line-height: 13px; border: 1px solid #c08a28; border-radius: 1px; padding: 0; letter-spacing: 0.08px; }

.config { margin-left: 25px; width: 1047px; display: flex; flex-direction: column; }
.name-row { display: flex; align-items: center; height: 20px; margin: 6px 0 0 7px; }
.name-row span { width: 119px; padding-top: 1px; }
.field { width: 913px; height: 20px; border: 1px solid #5c5b55; border-radius: 1px; line-height: 19px; padding-left: 3px; }
.tabs { display: flex; height: 20px; margin: 21px 0 0 11px; font-size: 12.500px; letter-spacing: 0; line-height: 19px; position: relative; white-space: nowrap; }
.tab.on { width: 182px; display: grid; margin-bottom: -1px; }
.tab.on > * { grid-area: 1 / 1; }
.tab.on b { padding-left: 23px; font-size: 12.500px; letter-spacing: 0.1px; }
.tab.on svg { overflow: visible; }
.tab.t2, .tab.t3 { border: 1px solid #c8c8c4; border-bottom: 0; border-radius: 3px 3px 0 0; background: linear-gradient(#f8f8f7, #edece8); line-height: 17px; }
.t2 { width: 122px; padding-left: 7px; }
.tab.t3 { width: 142px; margin-left: -1px; padding-left: 7px; }
.sheet { display: flex; justify-content: space-between; height: 576px; border: 1px solid #c8c8c4; box-shadow: inset 0 0 0 1px #fff; padding: 1px; margin-top: -1px; }
.sheet > .vsb { height: 573px; }
.form { width: 1010px; height: 573px; overflow: hidden; padding: 8px 0 0 13px; }
.legend { height: 18px; border-bottom: 1px solid #b4b4b2; line-height: 19px; letter-spacing: 0.3px; }
.form > .legend { width: 993px; }
.opts { display: flex; flex-direction: column; gap: 23px; padding-left: 35px; margin-top: 18px; }
.selects { display: grid; grid-template-columns: 133px 68px 161px 68px; row-gap: 8px; margin: 31px 0 0 -1px; line-height: 22px; }
.second { padding-left: 22px; }
.select { height: 22px; border: 1px solid #5c5b55; border-radius: 2px; background: linear-gradient(#fff, #e0dfdd); padding: 0 7px 0 3px; display: flex; justify-content: space-between; align-items: center; line-height: 20px; font-size: 12.500px; }
.select::after { content: ""; border: 4px solid transparent; border-top-color: #55544f; border-bottom: 0; }
.columns { display: flex; gap: 19px; margin: 21px 0 0 2px; letter-spacing: 0.25px; }
.columns .col > .check { margin-left: 6px; letter-spacing: 0.35px; }
.columns .legend { margin-top: 13px; }
.columns .opts { padding-left: 35px; }
.gen { width: 247px; flex: none; }
.gen .legend { width: 246px; }
.det { width: 723px; }
.dlg-foot { display: flex; justify-content: flex-end; gap: 7px; padding: 17px 6px 0 0; }
.btn { width: 88px; height: 23px; border: 1px solid #5c5b55; border-radius: 3px; background: linear-gradient(#fff, #dfdedb); text-align: center; line-height: 22px; }
.btn.default { box-shadow: inset 0 0 0 2px #8b9499; }

/* taskbar */
.taskbar { display: flex; height: 30px; background: #ebeae9; letter-spacing: 0; }
.launch { width: 28px; height: 28px; margin: 1px 0 0 1px; border: 1px solid #888783; border-radius: 4px; background: #fff; display: flex; align-items: center; justify-content: center; flex: none; }
.files { margin: 5px 0 0 3px; }
.handle { width: 6px; height: 18px; margin: 7px 3px 0 4px; flex: none; background: radial-gradient(circle, #aaa 0.8px, transparent 1px) 0 0 / 3px 3px; }
.h2 { margin: 7px 0 0 5px; }
.tasks { display: flex; gap: 2px; }
.task { display: flex; align-items: center; gap: 8px; width: 55px; height: 28px; margin-top: 1px; border: 1px solid #888783; border-radius: 4px; background: linear-gradient(#fff 40%, #f0efee); padding-left: 6px; font: bold 16px/20px "DejaVu Sans", sans-serif; letter-spacing: -1px; }
.task svg { width: 16px; height: 16px; }
.task.pressed { background: #c6c4c1; }
.dim { opacity: 0.55; }
.tray { margin-left: 0; }
.clock { margin: 4px 0 0 7px; font: 16px/20px "Noto Sans", sans-serif; letter-spacing: -0.38px; white-space: nowrap; }
```
